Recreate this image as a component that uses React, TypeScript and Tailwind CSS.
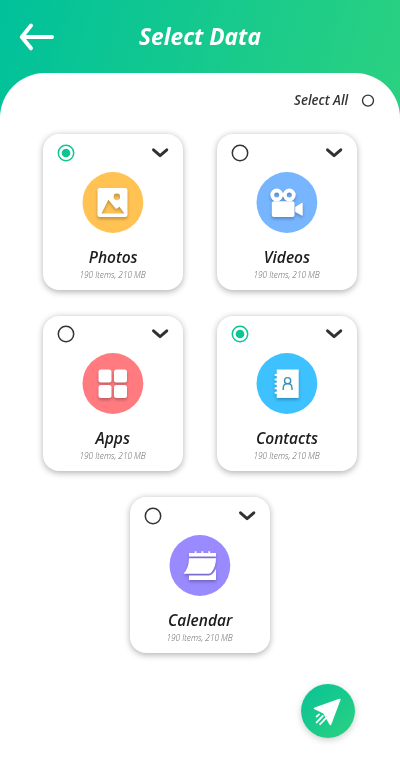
import React from 'react';

type CardProps = { title: string; checked?: boolean; color: string; children: React.ReactNode };

function Radio({ checked }: { checked?: boolean }) {
  return (
    <svg width="18" height="18" viewBox="0 0 18 18" fill="none">
      <circle cx="9" cy="9" r="7.7" stroke={checked ? '#0cc592' : '#333'} strokeWidth="1.5" />
      {checked && <circle cx="9" cy="9" r="4.3" fill="#0cc592" />}
    </svg>
  );
}

function Card({ title, checked, color, children }: CardProps) {
  return (
    <article className="flex h-[155.5px] w-[139.5px] flex-col items-center rounded-[16px] bg-white shadow-[0_1.5px_6px_rgba(0,0,0,0.3)]">
      <div className="flex h-[37.5px] w-full items-center justify-between px-[14px]">
        <Radio checked={checked} />
        <svg width="18" height="12" viewBox="0 0 18 12" fill="none" stroke="#303132" strokeWidth="2.9" strokeLinecap="round" strokeLinejoin="round">
          <path d="M2.5 2.8 9.1 8.7 15.8 2.8" />
        </svg>
      </div>
      <svg className="mt-[0.3px] shrink-0" width="62" height="61" viewBox="0 0 62 61">
        <circle cx="30.9" cy="30.5" r="30.4" fill={color} />
        <g className="drop-shadow-[0_2px_1.5px_rgba(0,0,0,0.25)]" fill="white">{children}</g>
      </svg>
      <h2 className="mt-[13px] h-[22px] scale-x-[0.97] whitespace-nowrap text-[16px] leading-[22px] font-semibold text-[#1b1b1b]">{title}</h2>
      <p className="mt-[1px] h-[12px] scale-x-[0.96] whitespace-nowrap text-[8.6px] leading-[12px] font-light text-[#666]">190 Items, 210 MB</p>
    </article>
  );
}

export default function App() {
  return (
    <main className="flex h-[760px] w-[400px] flex-col overflow-hidden bg-white font-['Open_Sans','Noto_Sans',sans-serif] italic">
      <div className="bg-[linear-gradient(106deg,#00c19b_0%,#2bd180_100%)]">
        <header className="grid h-[73px] grid-cols-[54px_1fr_54px] items-center">
          <svg className="ml-[19px]" width="36" height="30" viewBox="0 0 36 30" fill="none" stroke="white" strokeWidth="4" strokeLinecap="round" strokeLinejoin="round">
            <path d="M12 3.5 2.8 14.9 12 26.3M3.3 14.9H33" />
          </svg>
          <h1 className="-mt-[2px] scale-x-[0.945] text-center text-[24px] leading-8 font-bold text-white">Select Data</h1>
        </header>
        <div className="flex h-[48px] items-center justify-end rounded-t-[45px] bg-white pr-[25px] pt-[7px]">
          <span className="mr-[13px] origin-right scale-x-[0.98] whitespace-nowrap text-[13.5px] font-semibold text-[#333]">Select All</span>
          <svg width="14" height="14" viewBox="0 0 14 14" fill="none"><circle cx="7" cy="6.6" r="5.5" stroke="#333" strokeWidth="1.3" /></svg>
        </div>
      </div>
      <section className="mt-[13px] flex flex-wrap justify-center gap-x-[34.5px] gap-y-[26px] pr-[40.5px] pl-[40px]">
        <Card title="Photos" checked color="#ffc253">
          <path fillRule="evenodd" d="M18 16h25a2.5 2.5 0 0 1 2.5 2.5v24A2.5 2.5 0 0 1 43 45H18a2.5 2.5 0 0 1-2.5-2.5v-24A2.5 2.5 0 0 1 18 16Zm1.5 25.5h22.8l-4.8-6.8-3.4 2.4-7.7-9.3Zm12.2-16.8a3.2 3.2 0 1 0 6.4 0 3.2 3.2 0 0 0-6.4 0Z" />
        </Card>
        <Card title="Videos" color="#77b5ff">
          <path fillRule="evenodd" d="M20.7 16.6a6.4 6.4 0 1 0 0 12.8 6.4 6.4 0 0 0 0-12.8Zm0 3.9a2.5 2.5 0 1 1 0 5 2.5 2.5 0 0 1 0-5ZM33.3 16.6a6.4 6.4 0 1 0 0 12.8 6.4 6.4 0 0 0 0-12.8Zm0 3.9a2.5 2.5 0 1 1 0 5 2.5 2.5 0 0 1 0-5Z" />
          <rect x="15.8" y="29.3" width="22.7" height="15.7" rx="2" />
          <path d="M39.2 35 45.7 31q1-.5 1 .8v11q0 1.2-1 .7L39.2 40Z" />
        </Card>
        <Card title="Apps" color="#ff7b80">
          <rect x="16.5" y="16.5" width="13" height="13" rx="2.5" />
          <rect x="32" y="16.5" width="13" height="13" rx="2.5" />
          <rect x="16.5" y="32" width="13" height="13" rx="2.5" />
          <rect x="32" y="32" width="13" height="13" rx="2.5" />
        </Card>
        <Card title="Contacts" checked color="#3dc1ff">
          <path d="M20.7 16.5h22v28.4h-22Z" />
          <path d="M19.5 22h2m-2 4.5h2m-2 4.3h2m-2 4.4h2m-2 4.5h2" stroke="white" strokeWidth="2" strokeLinecap="round" />
          <path d="M27.2 37v-1.8q0-4.6 4.4-4.6T36 35.2V37" fill="none" stroke="#348fb7" strokeWidth="1.4" />
          <circle cx="31.6" cy="27.7" r="3.1" fill="white" stroke="#348fb7" strokeWidth="1.4" />
        </Card>
        <Card title="Calendar" color="#9a8aff">
          <path d="M20 18h5.7v-1.8h1.8V18h5v-1.8h1.8V18h5v-1.8h1.8V18H47v3.6H20Z" />
          <path d="M20 23.2h27q0 8.6-4.7 14.4-1 1.2-2.5 1.2H14.5q5.5-6 5.5-15.6Z" />
          <path d="M20 40.6h20q3.5-.2 7-6.6v11H20Z" />
        </Card>
      </section>
      <footer className="mt-[31px] flex justify-end pr-[45px]">
        <button aria-label="Send" className="flex size-[54px] items-center justify-center rounded-full bg-[linear-gradient(135deg,#08c397,#2bd180)] shadow-[0_2px_7px_rgba(0,0,0,0.2)]">
          <svg width="54" height="54" viewBox="0 0 54 54" fill="white">
            <path d="M38.3 14.8 13.6 23.4q-1.8.8-.1 1.8l8.8 4.3 6 10.8q1.2 1.7 2 .1L39.6 15.8q.2-1.3-1.3-1Z" />
            <path d="m18 30.4-2.4 2.2m6.2-.6-6.2 6.3m9.1-4-2.4 2.6m-.6.6-2.6 2.7" stroke="white" strokeWidth="1.8" strokeLinecap="round" />
          </svg>
        </button>
      </footer>
    </main>
  );
}
